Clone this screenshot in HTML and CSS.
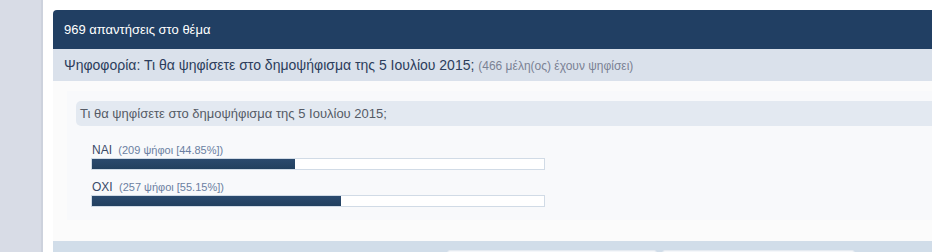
FILE: index.html
```html
<!DOCTYPE html>
<html lang="el">
<head>
    <meta charset="UTF-8">
    <title>Ψηφοφορία</title>
    <link rel="stylesheet" href="styles.css">
</head>
<body>
    <div class="sidebar"></div>
    <div class="page">
        <div class="block">
            <div class="block-head">969 απαντήσεις στο θέμα</div>
            <div class="poll-title">
                Ψηφοφορία: Τι θα ψηφίσετε στο δημοψήφισμα της 5 Ιουλίου 2015;
                <span class="poll-count">(466 μέλη(ος) έχουν ψηφίσει)</span>
            </div>
            <div class="poll-body">
                <div class="poll-box">
                    <div class="poll-question">Τι θα ψηφίσετε στο δημοψήφισμα της 5 Ιουλίου 2015;</div>
                    <div class="poll-options">
                        <div class="option">
                            <div class="option-label">ΝΑΙ <span class="option-votes">(209 ψήφοι [44.85%])</span></div>
                            <div class="bar"><div class="bar-fill" style="width: 44.85%"></div></div>
                        </div>
                        <div class="option">
                            <div class="option-label">ΟΧΙ <span class="option-votes">(257 ψήφοι [55.15%])</span></div>
                            <div class="bar"><div class="bar-fill" style="width: 55.15%"></div></div>
                        </div>
                    </div>
                </div>
            </div>
            <div class="block-foot">
                <div class="foot-btn wide"></div>
                <div class="foot-btn"></div>
            </div>
        </div>
    </div>
</body>
</html>
```

FILE: styles.css
```css
html {
    overflow: hidden;
}
body {
    margin: 0;
    display: flex;
    height: 252px;
    overflow: hidden;
    font-family: "Liberation Sans", Arial, sans-serif;
    background-color: #fff;
}
.sidebar {
    width: 41px;
    flex-shrink: 0;
    background-color: #d8dce6;
    border-right: 2px solid #cdd2dd;
}
.page {
    flex: 1;
    background-color: #fff;
    padding: 10px 0 0 10px;
    overflow: hidden;
}
.block-head {
    height: 39px;
    line-height: 40px;
    padding-left: 11px;
    background-color: #213f63;
    color: #fff;
    font-size: 13px;
    border-top-left-radius: 4px;
}
.poll-title {
    height: 32px;
    line-height: 32px;
    padding-left: 11px;
    background-color: #dae1eb;
    color: #2c3d5b;
    font-size: 14px;
}
.poll-count {
    color: #7a8294;
    font-size: 12px;
}
.poll-body {
    height: 160px;
    background-color: #fbfbfb;
    padding: 10px 0 0 14px;
    box-sizing: border-box;
}
.poll-box {
    background-color: #f8f9fb;
    padding: 10px 0 13px 9px;
}
.poll-question {
    height: 25px;
    line-height: 25px;
    padding-left: 4px;
    background-color: #e3e9f1;
    color: #555b66;
    font-size: 13px;
    border-radius: 5px 0 0 5px;
}
.poll-options {
    padding: 16px 0 0 15px;
}
.option + .option {
    margin-top: 9px;
}
.option-label {
    height: 16px;
    line-height: 16px;
    padding-left: 1px;
    color: #3a4a68;
    font-size: 12px;
}
.option-votes {
    margin-left: 3px;
    color: #6b7fa2;
    font-size: 11px;
}
.bar {
    width: 452px;
    height: 10px;
    background-color: #fff;
    border: 1px solid #d1dbe6;
}
.bar-fill {
    height: 100%;
    background: linear-gradient(#2b4a6e, #22405f);
}
.block-foot {
    height: 11px;
    box-sizing: border-box;
    overflow: hidden;
    background-color: #d1dde9;
    display: flex;
    gap: 5px;
    padding: 9px 0 0 394px;
}
.foot-btn {
    width: 191px;
    height: 12px;
    flex-shrink: 0;
    background-color: #f5f7fa;
    border: 1px solid #e6ebf1;
    border-radius: 3px;
}
.foot-btn.wide {
    width: 208px;
}
```
